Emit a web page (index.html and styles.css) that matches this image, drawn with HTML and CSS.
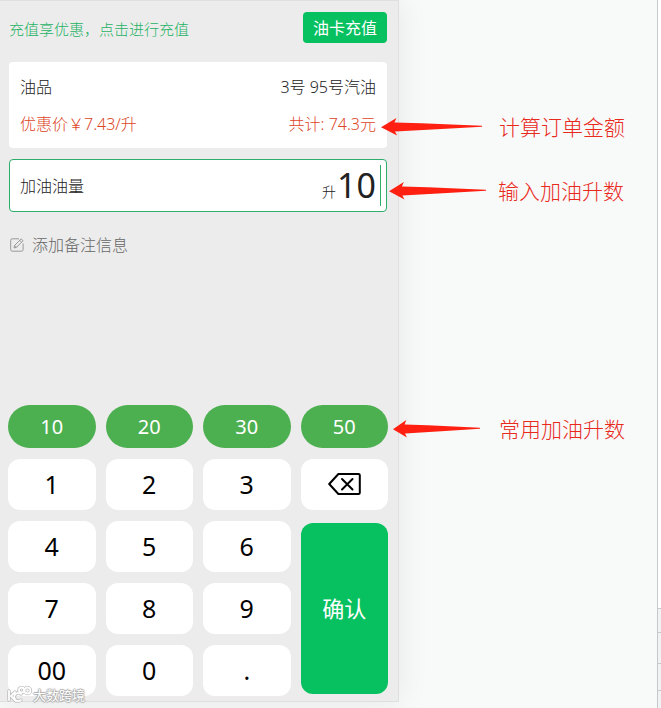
FILE: index.html
```html
<!DOCTYPE html>
<html lang="zh-CN">

<head>
    <meta charset="UTF-8">
    <meta name="viewport" content="width=device-width, initial-scale=1.0">
    <title>加油下单</title>
    <link rel="stylesheet" href="styles.css">
</head>

<body>
    <svg class="defs" aria-hidden="true">
        <symbol id="arrow" viewBox="0 0 100 18" preserveAspectRatio="none">
            <path d="M0 9.3L15.3 0 13.3 4.5 40 5.2 100 7.8V8.7L60 11 13.8 13.5 16 17.6Z" fill="#ff2011" />
        </symbol>
    </svg>

    <div class="page">
        <main class="phone">
            <div class="order">
                <div class="topbar">
                    <a href="#recharge" class="topbar-tip">充值享优惠，点击进行充值</a>
                    <button type="button" class="btn-recharge">油卡充值</button>
                </div>

                <div class="card">
                    <div class="card-row">
                        <span>油品</span>
                        <span>3号 95号汽油</span>
                    </div>
                    <div class="card-row card-price">
                        <span>优惠价￥7.43/升</span>
                        <span>共计: 74.3元</span>
                        <div class="note note-total">
                            <svg class="note-arrow"><use href="#arrow" /></svg>
                            <span>计算订单金额</span>
                        </div>
                    </div>
                </div>

                <div class="field">
                    <label for="liters">加油油量</label>
                    <div class="field-value">
                        <span class="unit">升</span>
                        <input id="liters" type="text" value="10" readonly>
                        <span class="caret"></span>
                    </div>
                    <div class="note note-input">
                        <svg class="note-arrow"><use href="#arrow" /></svg>
                        <span>输入加油升数</span>
                    </div>
                </div>

                <button type="button" class="remark">
                    <svg class="remark-icon" viewBox="0 0 14 14" fill="none" stroke="#999" stroke-width="1">
                        <path d="M9 .8H2.2Q.7.8.7 2.3v9.4q0 1.5 1.5 1.5h9.4q1.5 0 1.5-1.5V5.5" />
                        <path d="M4 10l.6-2.6L11.2.9l1.9 1.8-6.6 6.6Z M9.7 2.4l1.9 1.8 M4.6 7.4l1.9 1.9" />
                    </svg>
                    添加备注信息
                </button>
            </div>

            <div class="keyboard">
                <div class="quick">
                    <button type="button" class="quick-key">10</button>
                    <button type="button" class="quick-key">20</button>
                    <button type="button" class="quick-key">30</button>
                    <button type="button" class="quick-key">50</button>
                    <div class="note note-quick">
                        <svg class="note-arrow"><use href="#arrow" /></svg>
                        <span>常用加油升数</span>
                    </div>
                </div>

                <div class="keys">
                    <button type="button" class="key">1</button>
                    <button type="button" class="key">2</button>
                    <button type="button" class="key">3</button>
                    <button type="button" class="key" aria-label="删除">
                        <svg class="key-icon" viewBox="0 0 33 22" fill="none" stroke="#000" stroke-width="2" stroke-linejoin="round" stroke-linecap="round">
                            <path d="M1.2 11L10.4 1H30.5Q31.8 1 31.8 2.3V19.7Q31.8 21 30.5 21H10.4Z" />
                            <path d="M14 6l10.5 10.5M24.5 6L14 16.5" />
                        </svg>
                    </button>
                    <button type="button" class="key">4</button>
                    <button type="button" class="key">5</button>
                    <button type="button" class="key">6</button>
                    <button type="button" class="key key-confirm">确认</button>
                    <button type="button" class="key">7</button>
                    <button type="button" class="key">8</button>
                    <button type="button" class="key">9</button>
                    <button type="button" class="key">00</button>
                    <button type="button" class="key">0</button>
                    <button type="button" class="key">.</button>
                </div>
            </div>
        </main>

        <div class="edge">
            <span></span>
            <span></span>
            <span></span>
            <span></span>
        </div>

        <div class="watermark">
            <svg class="watermark-logo" viewBox="0 0 26 18" fill="none" stroke-linecap="round" stroke-linejoin="round">
                <g stroke="#bbb" stroke-width="3.4">
                    <path d="M2 5v9M8 6L4 10l5 5M14 8a4 4 0 1 0 0 6" />
                    <circle cx="14.5" cy="4" r="2.5" />
                    <circle cx="20.5" cy="4.5" r="3" />
                </g>
                <g stroke="#fff" stroke-width="1.8">
                    <path d="M2 5v9M8 6L4 10l5 5M14 8a4 4 0 1 0 0 6" />
                    <circle cx="14.5" cy="4" r="2.5" />
                    <circle cx="20.5" cy="4.5" r="3" />
                </g>
            </svg>
            <span>大数跨境</span>
        </div>
    </div>
</body>

</html>
```

FILE: styles.css
```css
* {
    margin: 0;
    padding: 0;
    box-sizing: border-box;
}

body {
    font-family: "Noto Sans", "Noto Sans CJK SC", sans-serif;
    font-size: 16px;
    font-weight: 300;
    line-height: 24px;
    color: #222;
    background: #f8faf9;
}

button,
input {
    font: inherit;
    color: inherit;
    border: none;
    background: none;
}

button {
    cursor: pointer;
}

.defs {
    display: block;
    width: 0;
    height: 0;
}

.page {
    position: relative;
    display: flex;
    min-height: 100vh;
}

/* 手机界面 */
.phone {
    flex: 1;
    display: flex;
    flex-direction: column;
    justify-content: space-between;
    margin: 0 262px 6px 0;
    border: 1px solid #dfdfdf;
    border-left: none;
    background: #ececec;
    box-shadow: 0 0 30px rgba(0, 0, 0, 0.08);
}

.order {
    padding: 11px 11px 0 9px;
}

.topbar {
    display: flex;
    justify-content: space-between;
    align-items: center;
    margin-bottom: 19px;
}

.topbar-tip {
    padding-top: 2px;
    font-size: 15px;
    color: #1db263;
    text-decoration: none;
}

.btn-recharge {
    height: 31px;
    padding: 0 10px;
    border-radius: 4px;
    background: #07c160;
    color: #fff;
    font-weight: 400;
}

.card {
    padding: 6px 11px;
    border-radius: 4px;
    background: #fff;
}

.card-row {
    position: relative;
    display: flex;
    justify-content: space-between;
    align-items: center;
    height: 37px;
}

.card-price {
    color: #dd4526;
}

.field {
    position: relative;
    display: flex;
    justify-content: space-between;
    align-items: center;
    height: 53px;
    margin-top: 11px;
    padding: 0 5px 0 10px;
    border: 1px solid #2fae6b;
    border-radius: 4px;
    background: #fff;
}

.field-value {
    display: flex;
    align-items: center;
}

.unit {
    padding-top: 12px;
    font-size: 14px;
}

.field-value input {
    width: 40px;
    height: 42px;
    padding-bottom: 2px;
    font-size: 34px;
    font-weight: 400;
    text-align: right;
    outline: none;
}

.caret {
    width: 1px;
    height: 41px;
    margin-left: 4px;
    background: #2fae6b;
}

.remark {
    display: flex;
    align-items: center;
    gap: 7px;
    margin-top: 21px;
    color: #666;
}

.remark-icon {
    width: 16px;
    height: 14px;
}

/* 数字键盘 */
.keyboard {
    padding: 0 10px 5px 8px;
}

.quick,
.keys {
    position: relative;
    display: grid;
    grid-template-columns: repeat(4, 1fr);
    gap: 11px 10px;
}

.quick {
    margin-bottom: 11px;
}

.quick-key {
    height: 43px;
    border-radius: 22px;
    background: #4caf50;
    color: #fff;
    font-size: 20px;
    font-weight: 400;
}

.key {
    display: flex;
    justify-content: center;
    align-items: center;
    height: 51px;
    padding-bottom: 2px;
    border-radius: 12px;
    background: #fff;
    color: #000;
    font-size: 25px;
    font-weight: 400;
}

.key-icon {
    width: 33px;
    height: 22px;
}

.key-confirm {
    grid-column: 4;
    grid-row: 2 / 5;
    height: auto;
    margin: 2px 0;
    background: #07c160;
    color: #fff;
    font-size: 22px;
}

/* 标注 */
.note {
    position: absolute;
    top: 0;
    bottom: 0;
    display: flex;
    align-items: center;
    color: #e8291c;
    font-size: 21px;
    white-space: nowrap;
}

.note-arrow {
    height: 18px;
}

.note-total {
    left: calc(100% + 5px);
    padding-top: 6px;
}

.note-total .note-arrow {
    width: 101px;
    margin-right: 17px;
}

.note-input {
    left: calc(100% + 3px);
    padding-top: 10px;
}

.note-input .note-arrow {
    width: 97px;
    margin-right: 12px;
}

.note-quick {
    left: calc(100% + 5px);
    padding-top: 4px;
}

.note-quick .note-arrow {
    width: 87px;
    margin-right: 19px;
}

/* 右侧边缘的表格 */
.edge {
    position: absolute;
    top: 0;
    right: 0;
    bottom: 0;
    display: grid;
    grid-template-rows: 24px 31px 27px 18px;
    align-content: end;
    width: 4px;
    border-left: 1px solid #c4c9cb;
    background: #fff;
}

.edge span {
    border-top: 1px solid #c4c9cb;
    background: #eff3f3;
}

.watermark {
    position: absolute;
    left: 7px;
    bottom: 4px;
    display: flex;
    align-items: center;
    height: 18px;
    color: #fff;
    font-size: 13px;
    font-weight: 400;
    line-height: 14px;
    text-shadow: 1px 0 1px #aaa, -1px 0 1px #aaa, 0 1px 1px #aaa, 0 -1px 1px #aaa;
}

.watermark-logo {
    width: 26px;
    height: 18px;
}
```
